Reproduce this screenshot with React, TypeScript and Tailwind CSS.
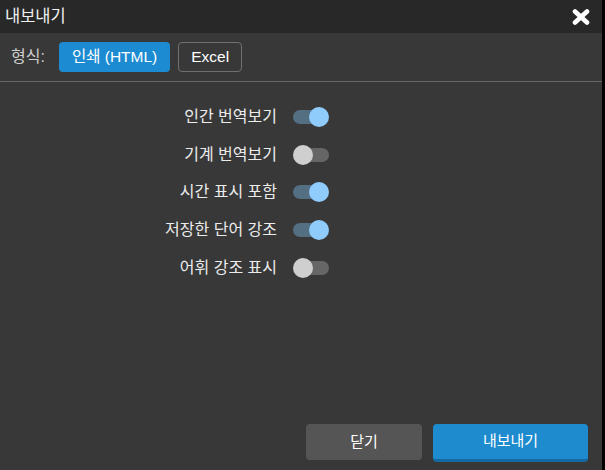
type Option = {
    key: string
    label: string
    on: boolean
}

const options: Option[] = [
    { key: "human", label: "인간 번역보기", on: true },
    { key: "machine", label: "기계 번역보기", on: false },
    { key: "time", label: "시간 표시 포함", on: true },
    { key: "saved", label: "저장한 단어 강조", on: true },
    { key: "vocab", label: "어휘 강조 표시", on: false },
]

function Toggle(props: { on: boolean }) {
    if (props.on) {
        return (
            <div className="relative w-[36px] h-[20px] flex items-center">
                <div className="w-[34px] h-[14px] rounded-full bg-[#546e82]" />
                <div className="absolute right-0 top-0 w-[20px] h-[20px] rounded-full bg-[#8fcbfb]" />
            </div>
        )
    }
    return (
        <div className="relative w-[36px] h-[20px] flex items-center">
            <div className="w-[34px] h-[14px] ml-[2px] rounded-full bg-[#666666]" />
            <div className="absolute left-0 top-0 w-[20px] h-[20px] rounded-full bg-[#cfcfcf]" />
        </div>
    )
}

function CloseIcon() {
    return (
        <svg width="18" height="16" viewBox="0 0 18 16">
            <path d="M3 2.5 L15 13.5 M15 2.5 L3 13.5" stroke="#ffffff" strokeWidth="4.6" strokeLinecap="round" />
        </svg>
    )
}

export default function App() {
    return (
        <div className="w-[605px] h-[470px] bg-black flex" style={{ fontFamily: "'Liberation Sans', 'Noto Sans CJK KR', sans-serif" }}>
            <div className="w-[602px] h-full flex flex-col bg-[#383838] text-[#ececec]">
                <div className="h-[33px] bg-[#282828] flex items-center justify-between pl-[5px] pr-[12px]">
                    <span className="text-[16.5px] text-[#f0f0f0]">내보내기</span>
                    <CloseIcon />
                </div>
                <div className="h-[49px] flex items-center pl-[11px] border-b border-[#666666]">
                    <span className="text-[16px] text-[#d0d0d0] mr-[14px]">형식:</span>
                    <button className="h-[30px] px-[13px] rounded-[4px] bg-[#1d8bd1] text-white text-[15.5px] mr-[8px]">인쇄 (HTML)</button>
                    <button className="h-[30px] px-[12px] rounded-[4px] border border-[#707070] text-white text-[15.5px]">Excel</button>
                </div>
                <div className="flex-1 flex flex-col pt-[25px] gap-[17.7px]">
                    {
                        options.map((option) => {
                            return (
                                <div key={option.key} className="flex items-center h-[20px]">
                                    <span className="w-[277px] text-right text-[16px] text-[#ececec]">{option.label}</span>
                                    <div className="ml-[16px]">
                                        <Toggle on={option.on} />
                                    </div>
                                </div>
                            )
                        })
                    }
                </div>
                <div className="flex justify-end gap-[11px] pr-[14px] pb-[8px]">
                    <button className="w-[116px] h-[36px] rounded-[4px] bg-[#555555] text-white text-[15px]">닫기</button>
                    <button className="w-[155px] h-[38px] rounded-[4px] bg-[#1d8bcd] border-b-[3px] border-[#1769a5] text-white text-[15px]">내보내기</button>
                </div>
            </div>
        </div>
    )
}
